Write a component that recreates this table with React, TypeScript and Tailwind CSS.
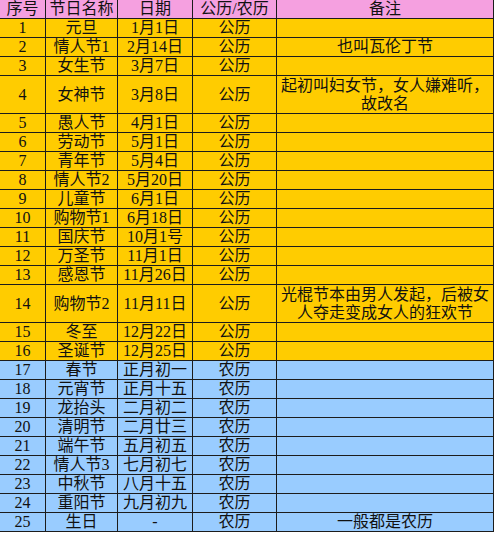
import React from "react";

type Row = {
  no: number;
  name: string;
  date: string;
  kind: string;
  note?: string[];
};

const rows: Row[] = [
  { no: 1, name: "元旦", date: "1月1日", kind: "公历" },
  { no: 2, name: "情人节1", date: "2月14日", kind: "公历", note: ["也叫瓦伦丁节"] },
  { no: 3, name: "女生节", date: "3月7日", kind: "公历" },
  { no: 4, name: "女神节", date: "3月8日", kind: "公历", note: ["起初叫妇女节，女人嫌难听，", "故改名"] },
  { no: 5, name: "愚人节", date: "4月1日", kind: "公历" },
  { no: 6, name: "劳动节", date: "5月1日", kind: "公历" },
  { no: 7, name: "青年节", date: "5月4日", kind: "公历" },
  { no: 8, name: "情人节2", date: "5月20日", kind: "公历" },
  { no: 9, name: "儿童节", date: "6月1日", kind: "公历" },
  { no: 10, name: "购物节1", date: "6月18日", kind: "公历" },
  { no: 11, name: "国庆节", date: "10月1号", kind: "公历" },
  { no: 12, name: "万圣节", date: "11月1日", kind: "公历" },
  { no: 13, name: "感恩节", date: "11月26日", kind: "公历" },
  { no: 14, name: "购物节2", date: "11月11日", kind: "公历", note: ["光棍节本由男人发起，后被女", "人夺走变成女人的狂欢节"] },
  { no: 15, name: "冬至", date: "12月22日", kind: "公历" },
  { no: 16, name: "圣诞节", date: "12月25日", kind: "公历" },
  { no: 17, name: "春节", date: "正月初一", kind: "农历" },
  { no: 18, name: "元宵节", date: "正月十五", kind: "农历" },
  { no: 19, name: "龙抬头", date: "二月初二", kind: "农历" },
  { no: 20, name: "清明节", date: "二月廿三", kind: "农历" },
  { no: 21, name: "端午节", date: "五月初五", kind: "农历" },
  { no: 22, name: "情人节3", date: "七月初七", kind: "农历" },
  { no: 23, name: "中秋节", date: "八月十五", kind: "农历" },
  { no: 24, name: "重阳节", date: "九月初九", kind: "农历" },
  { no: 25, name: "生日", date: "-", kind: "农历", note: ["一般都是农历"] },
];

const cols = "grid grid-cols-[46px_72px_75px_84px_217px]";
const cell = "flex flex-col items-center justify-center border-r border-[#1c1c1c] text-center leading-[18px]";

export default function App() {
  return (
    <div
      className="w-[496px] h-[533px] bg-white text-[16px] text-[#111]"
      style={{ fontFamily: '"Liberation Serif", "Noto Sans CJK SC", serif' }}
    >
      <div className="w-[494px]">
        {/* header */}
        <div className={`${cols} h-[19px] border-b border-[#1c1c1c] bg-[#f5a0e0]`}>
          <div className={cell}>序号</div>
          <div className={cell}>节日名称</div>
          <div className={cell}>日期</div>
          <div className={cell}>公历/农历</div>
          <div className={cell}>备注</div>
        </div>

        {rows.map((r) => {
          const tall = (r.note?.length ?? 0) > 1;
          const bg = r.kind === "公历" ? "bg-[#ffcc00]" : "bg-[#99ccff]";
          return (
            <div
              key={r.no}
              className={`${cols} ${tall ? "h-[38px]" : "h-[19px]"} border-b border-[#1c1c1c] ${bg}`}
            >
              <div className={cell}>{r.no}</div>
              <div className={cell}>{r.name}</div>
              <div className={cell}>{r.date}</div>
              <div className={cell}>{r.kind}</div>
              <div className={cell}>
                {r.note?.map((line) => (
                  <span key={line} className="whitespace-nowrap">
                    {line}
                  </span>
                ))}
              </div>
            </div>
          );
        })}
      </div>
    </div>
  );
}
